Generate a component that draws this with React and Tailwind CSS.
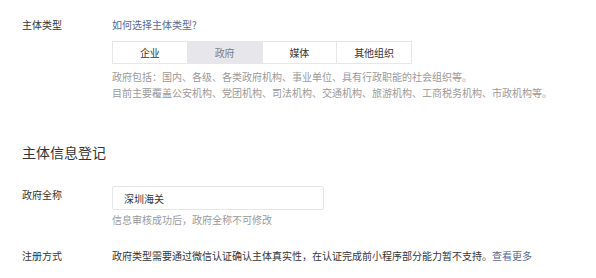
import React, { useState } from "react";

const types = ["企业", "政府", "媒体", "其他组织"];

const App = () => {
  const [active, setActive] = useState("政府");
  const [name, setName] = useState("深圳海关");

  return (
    <div
      className="w-[596px] h-[278px] bg-white overflow-hidden pl-[22px] text-[#353535] text-[10px] leading-4"
      style={{ fontFamily: '"Noto Sans CJK SC", "Noto Sans", sans-serif' }}
    >
      <div className="flex pt-[17px]">
        <div className="w-[90px] shrink-0">主体类型</div>
        <div className="flex flex-col">
          <a href="#" className="text-[#576b95]">
            如何选择主体类型?
          </a>
          <div className="flex mt-2 h-[23px] w-[300px] border border-[#e7e7eb]">
            {types.map((t, i) => (
              <button
                key={t}
                onClick={() => setActive(t)}
                className={`flex-1 flex items-center justify-center ${
                  i > 0 ? "border-l border-[#e7e7eb]" : ""
                } ${
                  active === t
                    ? "bg-[#e7e7eb] text-[#7d7d8c]"
                    : "bg-white text-[#353535]"
                }`}
              >
                {t}
              </button>
            ))}
          </div>
          <div className="mt-[5px] text-[#9a9a9a]">
            <p>政府包括：国内、各级、各类政府机构、事业单位、具有行政职能的社会组织等。</p>
            <p>目前主要覆盖公安机构、党团机构、司法机构、交通机构、旅游机构、工商税务机构、市政机构等。</p>
          </div>
        </div>
      </div>

      <h2 className="mt-[41px] text-[14px] leading-5 text-[#353535]">主体信息登记</h2>

      <div className="flex mt-[24px]">
        <div className="w-[90px] shrink-0 pt-[1px]">政府全称</div>
        <div className="flex flex-col">
          <input
            autoFocus
            value={name}
            onChange={(e) => setName(e.target.value)}
            className="w-[212px] h-[24px] border border-[#e7e7eb] rounded-[2px] px-[11px] text-[10px] text-[#353535] outline-none"
          />
          <p className="mt-[2px] text-[#9a9a9a]">信息审核成功后，政府全称不可修改</p>
        </div>
      </div>

      <div className="flex mt-[20px]">
        <div className="w-[90px] shrink-0">注册方式</div>
        <p>
          政府类型需要通过微信认证确认主体真实性，在认证完成前小程序部分能力暂不支持。
          <a href="#" className="text-[#576b95]">
            查看更多
          </a>
        </p>
      </div>
    </div>
  );
};

export default App;
